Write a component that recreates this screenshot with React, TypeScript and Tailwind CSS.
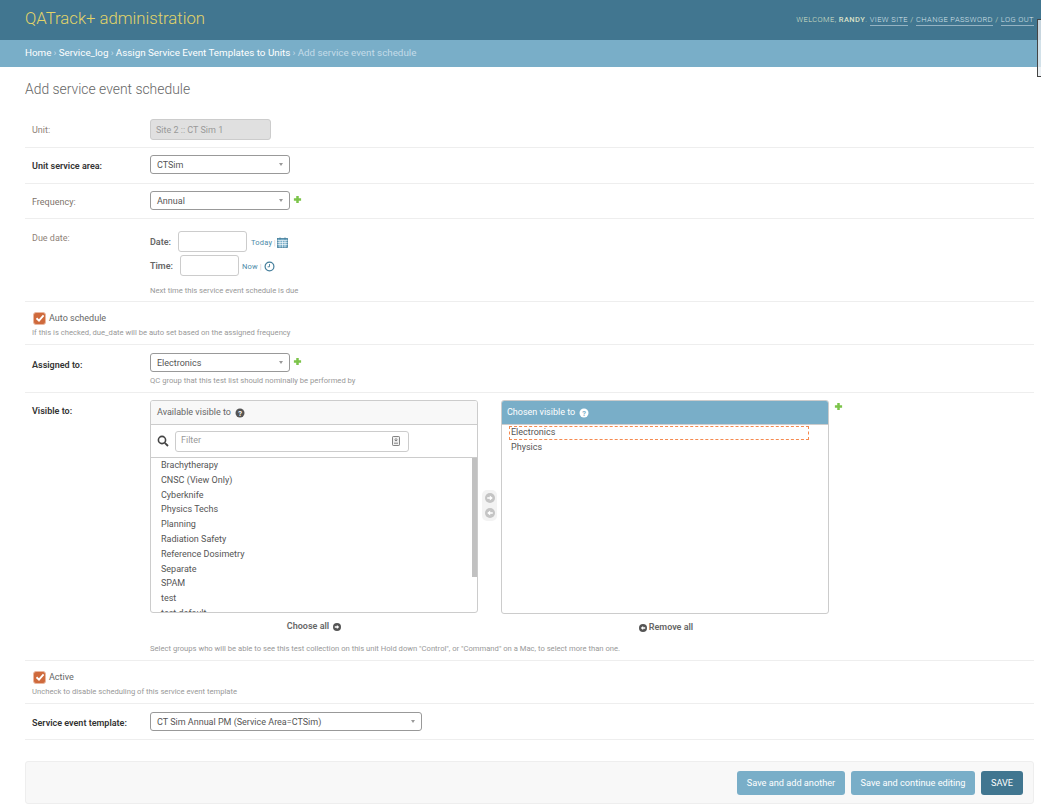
import React from "react";

const Plus = () => (
  <svg width="9" height="9" viewBox="0 0 10 10" className="shrink-0">
    <path d="M3.6 1h2.8v2.6H9v2.8H6.4V9H3.6V6.4H1V3.6h2.6z" fill="#7cc44a" />
  </svg>
);

const Help = ({ light }: { light?: boolean }) => (
  <svg width="10" height="10" viewBox="0 0 10 10" className="shrink-0">
    <circle cx="5" cy="5" r="4.5" fill={light ? "#ffffff" : "#555555"} />
    <text x="5" y="7.6" textAnchor="middle" fontSize="7.5" fontWeight="700" fontFamily="Roboto" fill={light ? "#79aec8" : "#ffffff"}>?</text>
  </svg>
);

const Arrow = ({ dir, fill, size = 10 }: { dir: "l" | "r"; fill: string; size?: number }) => (
  <svg width={size} height={size} viewBox="0 0 10 10" className="shrink-0">
    <circle cx="5" cy="5" r="5" fill={fill} />
    <path d={dir === "r" ? "M2.2 4.2h2.6V2.4L7.8 5 4.8 7.6V5.8H2.2z" : "M7.8 4.2H5.2V2.4L2.2 5l3 2.6V5.8h2.6z"} fill="#ffffff" />
  </svg>
);

const Select = ({ value, w }: { value: string; w: string }) => (
  <div className={`${w} h-[19px] border border-[#999] rounded-[3px] bg-white flex items-center justify-between pl-[6px] pr-[6px] text-[9px] text-[#555]`}>
    <span className="pt-[3px]">{value}</span>
    <span className="w-0 h-0 border-l-[2px] border-r-[2px] border-t-[3px] border-l-transparent border-r-transparent border-t-[#999]" />
  </div>
);

const Check = () => (
  <span className="w-[13px] h-[13px] rounded-[3px] bg-[#cf6a3c] border border-[#eab8a0] flex items-center justify-center shrink-0">
    <svg width="10" height="10" viewBox="0 0 10 10">
      <path d="M1.5 5.2 4 7.6 8.6 2.4" stroke="#fff" strokeWidth="1.9" fill="none" />
    </svg>
  </span>
);

const Help8 = ({ children, className = "" }: { children: React.ReactNode; className?: string }) => (
  <p className={`text-[7.65px] leading-[10px] text-[#999] ${className}`}>{children}</p>
);

const available = ["Brachytherapy", "CNSC (View Only)", "Cyberknife", "Physics Techs", "Planning", "Radiation Safety", "Reference Dosimetry", "Separate", "SPAM", "test", "test default"];

export default function App() {
  return (
    <div className="relative w-[1041px] h-[808px] overflow-hidden bg-white text-[#333]" style={{ fontFamily: "Roboto, sans-serif" }}>
      <header className="h-10 bg-[#417690] flex items-center justify-between pl-[25px] pr-[7px]">
        <h1 className="text-[16.7px] font-light text-[#e3d468] leading-none -mt-[1px]">QATrack+ administration</h1>
        <div className="text-[7.5px] tracking-[0.42px] text-[#d8e0c8] font-light uppercase -mt-[1px] whitespace-nowrap">
          Welcome, <b className="font-medium">Randy</b>.{" "}
          <span className="border-b border-[#94b2c2] pb-[1px] text-[#d5e1e8]">View site</span> /{" "}
          <span className="border-b border-[#94b2c2] pb-[1px] text-[#d5e1e8]">Change password</span> /{" "}
          <span className="border-b border-[#94b2c2] pb-[1px] text-[#d5e1e8]">Log out</span>
        </div>
      </header>
      <nav className="h-[27px] bg-[#79aec8] flex items-center pl-[25px] text-[9.8px] text-[#c4dce8] whitespace-nowrap">
        <span className="text-white">Home</span><span className="mx-[2.2px]">›</span>
        <span className="text-white">Service_log</span><span className="mx-[2.2px]">›</span>
        <span className="text-white">Assign Service Event Templates to Units</span><span className="mx-[2.2px]">›</span>
        <span>Add service event schedule</span>
      </nav>

      <main className="pl-[25px] pr-[7px] pt-[13px]">
        <h2 className="text-[13.9px] font-light text-[#666] leading-[18px] mb-[21px]">Add service event schedule</h2>

        <div className="h-[29px] border-b border-[#eee] flex items-start pl-[7px]">
          <label className="w-[118px] text-[9px] text-[#8f8278] pt-[5px] shrink-0">Unit:</label>
          <div className="w-[121px] h-[21px] bg-[#e0e0e0] border border-[#ccc] rounded-[3px] text-[9px] text-[#999] pl-[5px] pt-[4px]">Site 2 :: CT Sim 1</div>
        </div>

        <div className="h-[36px] border-b border-[#eee] flex items-start pl-[7px] pt-[7px]">
          <label className="w-[118px] text-[9px] font-semibold text-[#333] pt-[5px] shrink-0">Unit service area:</label>
          <Select value="CTSim" w="w-[140px]" />
        </div>

        <div className="h-[35px] border-b border-[#eee] flex items-start pl-[7px] pt-[7px]">
          <label className="w-[118px] text-[9px] text-[#7d736b] pt-[5px] shrink-0">Frequency:</label>
          <Select value="Annual" w="w-[140px]" />
          <span className="ml-[2.5px] mt-[4px]"><Plus /></span>
        </div>

        <div className="h-[83px] border-b border-[#eee] flex items-start pl-[7px] pt-[12px]">
          <label className="w-[118px] text-[9px] text-[#8f8278] pt-[1px] shrink-0">Due date:</label>
          <div>
            <div className="flex items-center h-[21px]">
              <b className="text-[9px] font-semibold text-[#666] mr-[7px] pt-[2px]">Date:</b>
              <span className="w-[69px] h-[21px] border border-[#ccc] rounded-[3px]" />
              <span className="text-[7.5px] text-[#4d8aa8] ml-[4px] tracking-[0.2px] pt-[2px]">Today</span>
              <span className="text-[7.5px] text-[#ccc] ml-[1.5px] mr-[1px] pt-[2px]">|</span>
              <svg width="11" height="11" viewBox="0 0 11 11" className="mt-[2px]">
                <rect x="0.5" y="1.5" width="10" height="9" fill="#79aec8" stroke="#447e9b" strokeWidth="0.8" />
                <path d="M0.5 3.5h10M0.5 5.5h10M0.5 7.5h10M3 3.5v7M5.5 3.5v7M8 3.5v7" stroke="#fff" strokeWidth="0.6" />
                <path d="M3 0.5v2M8 0.5v2" stroke="#447e9b" />
              </svg>
            </div>
            <div className="flex items-center h-[21px] mt-[3px]">
              <b className="text-[9px] font-semibold text-[#666] mr-[7px] pt-[2px]">Time:</b>
              <span className="w-[59px] h-[21px] border border-[#ccc] rounded-[3px]" />
              <span className="text-[7.5px] text-[#4d8aa8] ml-[3px] tracking-[0.2px] pt-[2px]">Now</span>
              <span className="text-[7.5px] text-[#ccc] mx-[2px] pt-[2px]">|</span>
              <svg width="11" height="11" viewBox="0 0 11 11" className="mt-[2px]">
                <circle cx="5.5" cy="5.5" r="4.4" fill="none" stroke="#447e9b" strokeWidth="1.2" />
                <path d="M5.5 3v2.8H3.6" fill="none" stroke="#447e9b" strokeWidth="0.9" />
              </svg>
            </div>
            <Help8 className="mt-[10px]">Next time this service event schedule is due</Help8>
          </div>
        </div>

        <div className="h-[43px] border-b border-[#eee] pl-[7px] pt-[9px]">
          <div className="flex items-center gap-[3px] pl-[1px] h-[14px]">
            <Check />
            <span className="text-[9px] text-[#666] pt-[2px]">Auto schedule</span>
          </div>
          <Help8 className="mt-[3px]">If this is checked, due_date will be auto set based on the assigned frequency</Help8>
        </div>

        <div className="h-[48px] border-b border-[#eee] flex items-start pl-[7px] pt-[8px]">
          <label className="w-[118px] text-[9px] font-semibold text-[#333] pt-[6px] shrink-0">Assigned to:</label>
          <div>
            <div className="flex items-start">
              <Select value="Electronics" w="w-[140px]" />
              <span className="ml-[2.5px] mt-[4px]"><Plus /></span>
            </div>
            <Help8 className="mt-[4px]">QC group that this test list should nominally be performed by</Help8>
          </div>
        </div>

        <div className="h-[268px] border-b border-[#eee] flex items-start pl-[7px] pt-[7px]">
          <label className="w-[118px] text-[9px] font-semibold text-[#333] pt-[5px] shrink-0">Visible to:</label>
          <div>
            <div className="flex items-start">
              <div className="w-[328px]">
                <div className="border border-[#ccc] rounded-[3px] overflow-hidden">
                  <div className="h-[24px] bg-[#f8f8f8] border-b border-[#ccc] flex items-center gap-[4px] pl-[6px] text-[9px] text-[#666]">
                    Available visible to <Help />
                  </div>
                  <div className="h-[33px] border-b border-[#ccc] flex items-center pl-[6px]">
                    <svg width="12" height="12" viewBox="0 0 12 12" className="mr-[6px]">
                      <circle cx="5" cy="5" r="3.6" fill="none" stroke="#444" strokeWidth="1.6" />
                      <path d="M7.8 7.8 11 11" stroke="#444" strokeWidth="1.8" />
                    </svg>
                    <div className="w-[234px] h-[21px] border border-[#ccc] rounded-[3px] flex items-center justify-between pl-[5px] pr-[8px] text-[9px] text-[#999]">
                      Filter
                      <svg width="8" height="10" viewBox="0 0 8 10">
                        <rect x="0.5" y="0.5" width="7" height="9" rx="0.8" fill="#f2f2f2" stroke="#666" strokeWidth="0.8" />
                        <path d="M4 2v2.5M2.5 3.7 4 5l1.5-1.3M2 7.2h4" stroke="#555" strokeWidth="0.7" fill="none" />
                      </svg>
                    </div>
                  </div>
                  <div className="h-[154px] overflow-hidden relative">
                    <ul className="pl-[10px] text-[9px] leading-[14.8px] text-[#555]">
                      {available.map((a) => <li key={a}>{a}</li>)}
                    </ul>
                    <span className="absolute right-0 top-0 w-[5px] h-[119px] bg-[#c1c1c1]" />
                  </div>
                </div>
                <div className="flex items-center justify-center gap-[4px] mt-[7px] text-[9px] font-semibold text-[#666]">
                  Choose all <Arrow dir="r" fill="#555" size={8} />
                </div>
              </div>

              <div className="w-[23px] mt-[90px] flex justify-center">
                <div className="w-[15px] h-[31px] bg-[#f3f3f3] rounded-[5px] flex flex-col items-center justify-center gap-[5px]">
                  <Arrow dir="r" fill="#c4c4c4" />
                  <Arrow dir="l" fill="#c4c4c4" />
                </div>
              </div>

              <div className="w-[328px]">
                <div className="border border-[#ccc] rounded-[3px] overflow-hidden">
                  <div className="h-[23px] bg-[#79aec8] flex items-center gap-[4px] pl-[5px] text-[9px] text-white">
                    Chosen visible to <Help light />
                  </div>
                  <div className="h-[189px] border-t border-[#ccc] pl-[7px] pr-[6px] pt-[1px] text-[9px] leading-[15px] text-[#555]">
                    <div className="w-[300px] h-[14px] border border-dashed border-[#f58a50] pl-[1px] leading-[10px]">Electronics</div>
                    <div className="pl-[2px]">Physics</div>
                  </div>
                </div>
                <div className="flex items-center justify-center gap-[2px] mt-[7px] text-[9px] font-semibold text-[#666] pl-[2px]">
                  <Arrow dir="l" fill="#555" size={8} /> Remove all
                </div>
              </div>
              <span className="ml-[5px] mt-[2px]"><Plus /></span>
            </div>
            <Help8 className="mt-[9px]">Select groups who will be able to see this test collection on this unit Hold down "Control", or "Command" on a Mac, to select more than one.</Help8>
          </div>
        </div>

        <div className="h-[43px] border-b border-[#eee] pl-[7px] pt-[9px]">
          <div className="flex items-center gap-[3px] pl-[1px] h-[14px]">
            <Check />
            <span className="text-[9px] text-[#666] pt-[2px]">Active</span>
          </div>
          <Help8 className="mt-[3px]">Uncheck to disable scheduling of this service event template</Help8>
        </div>

        <div className="h-[36px] border-b border-[#eee] flex items-start pl-[7px] pt-[8px]">
          <label className="w-[118px] text-[9px] font-semibold text-[#333] pt-[5px] shrink-0">Service event template:</label>
          <Select value="CT Sim Annual PM (Service Area=CTSim)" w="w-[272px]" />
        </div>

        <div className="mt-[21px] h-[43px] bg-[#f8f8f8] border border-[#eee] rounded-[3px] flex items-center justify-end gap-[6px] pr-[10px]">
          <span className="h-[24px] w-[108px] bg-[#79aec8] rounded-[3px] text-white text-[9.2px] flex items-center justify-center">Save and add another</span>
          <span className="h-[24px] w-[124px] bg-[#79aec8] rounded-[3px] text-white text-[9.2px] flex items-center justify-center">Save and continue editing</span>
          <span className="h-[24px] w-[42px] bg-[#417690] rounded-[3px] text-white text-[9.2px] flex items-center justify-center">SAVE</span>
        </div>
      </main>

      <div className="absolute left-[1037px] top-[19px] w-[10px] h-[58px] border border-[#444] bg-[#e8eef1]/80" />
    </div>
  );
}
